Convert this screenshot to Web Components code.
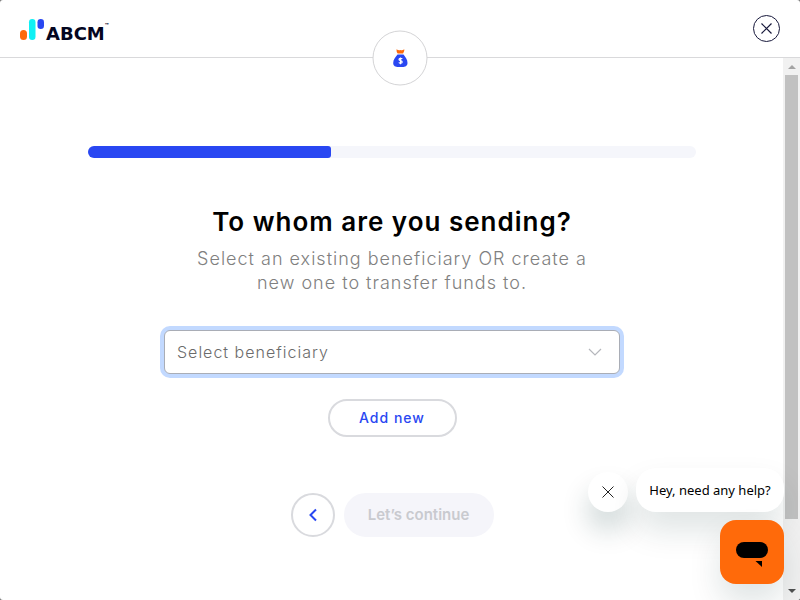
<!DOCTYPE html>
<html lang="en">
<head>
<meta charset="utf-8">
<meta name="viewport" content="width=device-width, initial-scale=1">
<title>Send money</title>
<style>
html,body{height:100%}
body{margin:0;background:#777;font-family:Inter,"Noto Sans",sans-serif;--blue:#2947f2}
</style>
</head>
<body>
<transfer-app></transfer-app>
<script>
const define=(name,html,setup)=>customElements.define(name,class extends HTMLElement{
  connectedCallback(){
    if(this.shadowRoot)return;
    const t=document.createElement('template');
    t.innerHTML=html;
    this.attachShadow({mode:'open'}).append(t.content.cloneNode(true));
    if(setup)setup(this);
  }
});

define('brand-logo',`<style>
:host{display:block}
a{display:flex;align-items:flex-start;color:#04061f;text-decoration:none}
svg{display:block;margin-right:1px}
b{font:bold 18px/20px "DejaVu Sans",sans-serif;margin-top:5px}
sup{font-size:6px;font-weight:800;line-height:8px;margin:3px 0 0}
</style>
<a href="#" aria-label="ABCM home"><svg width="25" height="22" viewBox="0 0 25 22" aria-hidden="true">
<rect x="0" y="11" width="7" height="10" rx="3.5" fill="#ff6a0a"/><rect x="9" y="0" width="6.500" height="21" rx="3.200" fill="#0ff0f4"/><rect x="17.500" y="0" width="6.500" height="10" rx="3.200" fill="#2947f2"/></svg><b>ABCM</b><sup>™</sup></a>`);

define('step-badge',`<style>
:host{box-sizing:border-box;display:grid;place-items:center;width:55px;height:55px;border:1px solid #d4d4d6;border-radius:50%;background:#fff}
</style>
<svg width="16" height="20" viewBox="0 0 16 20" role="img" aria-label="Money bag">
<path d="M4 .8Q6 2.200 8 1.600Q10 2.200 11.800.8Q12.200 3 10.600 5H5.200Q3.800 3.200 4 .8Z" fill="#ff6a0a"/>
<path d="M5 6H11C13 8.500 15 11 15 14.500C15 17.500 12.500 18.500 10 18.500H6C3 18.500.7 17.500.7 14.500C.7 11 3 8.500 5 6Z" fill="#2947f2"/>
<path d="M9.800 10.500C9.200 9.700 6.500 9.600 6.500 11C6.500 12.400 9.700 11.900 9.700 13.500C9.700 15 7 14.900 6.300 14M8 9V15.800" fill="none" stroke="#fff" stroke-width="1.200"/></svg>`);

define('app-header',`<style>
:host{position:relative;box-sizing:border-box;display:flex;align-items:center;justify-content:space-between;min-height:58px;padding:12px 20px;border-bottom:1px solid #d9d9db}
brand-logo{padding-top:5px}
button{display:grid;place-items:center;box-sizing:border-box;width:27px;height:27px;padding:0;border:1px solid #17183b;border-radius:50%;background:#fff;color:#17183b}
step-badge{position:absolute;left:50%;top:100%;transform:translate(-50%,-50%);z-index:2;margin-top:1px}
</style>
<brand-logo></brand-logo><step-badge></step-badge>
<button aria-label="Close"><svg width="13" height="13" viewBox="0 0 13 13" aria-hidden="true"><path d="M1.500 1.500L11.500 11.500M11.500 1.500L1.500 11.500" stroke="currentColor" stroke-width="1.200"/></svg></button>`);

define('step-progress',`<style>
:host{display:block;height:12px;border-radius:6px;background:#f5f6fb;overflow:hidden}
div{height:100%;border-radius:0 3px 3px 0;background:var(--blue)}
</style><div role="progressbar" aria-label="Transfer progress" aria-valuemin="0" aria-valuemax="100"></div>`,h=>{
  const bar=h.shadowRoot.querySelector('div'),v=h.getAttribute('value');
  bar.style.width=v+'%';bar.setAttribute('aria-valuenow',v);
});

define('beneficiary-select',`<style>
:host{display:block;position:relative}
select{appearance:none;display:block;box-sizing:border-box;width:100%;height:44px;padding:0 40px 0 12px;border:1px solid #a9adb6;border-radius:6px;outline:0;background:#fff;box-shadow:0 0 0 4px #c2d9ff;color:#6b6b6b;font:300 16px/24px Inter,sans-serif;letter-spacing:1px}
svg{position:absolute;right:18px;top:18px;pointer-events:none}
</style>
<select aria-label="Beneficiary"><option>Select beneficiary</option></select>
<svg width="14" height="9" viewBox="0 0 14 9" aria-hidden="true"><path d="M1 1L7 7L13 1" fill="none" stroke="#b5b7bc" stroke-width="1.200"/></svg>`);

define('pill-button',`<style>
:host{display:block}
button{box-sizing:border-box;display:grid;place-items:center;width:100%;height:100%;padding:0;border:2px solid #d9dade;border-radius:24px;background:#fff;color:var(--blue);font:500 14px/20px Inter,sans-serif;letter-spacing:1px}
:host([muted]) button{border-color:#f5f5fa;background:#f5f5fa;color:#c9cacf;font-size:15px;font-weight:600;letter-spacing:0}
</style><button><slot></slot></button>`,h=>{
  const b=h.shadowRoot.querySelector('button');
  if(h.hasAttribute('muted'))b.disabled=true;
  if(h.hasAttribute('label'))b.setAttribute('aria-label',h.getAttribute('label'));
});

define('transfer-form',`<style>
:host{display:flex;flex-direction:column;align-items:center;padding:88px 88px 40px}
step-progress{align-self:stretch}
h1{margin:46px 0 0;color:#000;font-size:26px;font-weight:600;line-height:36px;letter-spacing:1px;text-align:center}
p{max-width:420px;margin:7px 0 0;color:#808080;font-size:18px;font-weight:300;line-height:24px;letter-spacing:1px;text-align:center}
beneficiary-select{width:75%;margin-top:35px}
.add{width:129px;height:38px;margin-top:25px}
footer{display:flex;gap:9px;margin-top:56px}
.back{width:44px;height:44px}
.next{width:150px;height:44px}
</style>
<step-progress value="40"></step-progress>
<h1>To whom are you sending?</h1>
<p>Select an existing beneficiary OR create a new one to transfer funds to.</p>
<beneficiary-select></beneficiary-select>
<pill-button class="add">Add new</pill-button>
<footer><pill-button class="back" label="Back"><svg width="10" height="14" viewBox="0 0 10 14" aria-hidden="true"><path d="M8 1.500L2.500 7L8 12.500" fill="none" stroke="#2947f2" stroke-width="2"/></svg></pill-button>
<pill-button class="next" muted>Let’s continue</pill-button></footer>`);

define('scroll-rail',`<style>
:host{display:flex;flex-direction:column;align-items:center;box-sizing:border-box;width:17px;padding:7px 0;margin-left:-1px;background:#f1f1f1}
svg{display:block;flex:none}
div{width:13px;flex:442;margin-top:6px;background:#c1c1c1}
i{flex:70}
</style><svg width="8" height="4" viewBox="0 0 8 4" aria-hidden="true"><path d="M0 4L4 0L8 4Z" fill="#a3a3a3"/></svg><div></div><i></i><svg width="8" height="4" viewBox="0 0 8 4" aria-hidden="true"><path d="M0 0L4 4L8 0Z" fill="#505050"/></svg>`);

define('help-chat',`<style>
:host{display:flex;flex-direction:column;align-items:flex-end;gap:8px}
.row{display:flex;align-items:flex-end;gap:8px}
button{box-sizing:border-box;display:grid;place-items:center;padding:0;border:0;background:#fff;box-shadow:0 18px 32px rgba(0,50,50,.13)}
.close{width:40px;height:40px;border-radius:50%;box-shadow:0 18px 28px rgba(0,50,50,.2)}
.message{min-width:148px;height:44px;padding:0 12px;border-radius:20px;color:#000;font:400 13px/20px "Noto Sans",sans-serif;white-space:nowrap}
.open{width:64px;height:64px;border-radius:16px;background:#ff6a0a}
</style>
<div class="row"><button class="close" aria-label="Dismiss message"><svg width="12" height="12" viewBox="0 0 12 12" aria-hidden="true"><path d="M.5.5L11.500 11.500M11.500.5L.5 11.500" stroke="#222" stroke-width="1"/></svg></button><button class="message">Hey, need any help?</button></div>
<button class="open" aria-label="Open chat"><svg width="32" height="32" viewBox="0 0 32 32" aria-hidden="true"><rect y="6" width="32" height="16" rx="8"/><path d="M19.500 25H26V31Z"/></svg></button>`);

define('transfer-app',`<style>
:host{position:relative;display:flex;flex-direction:column;min-height:100vh;background:#fff;border-radius:3px;overflow:hidden}
main{flex:1;display:flex}
transfer-form{flex:1}
help-chat{position:absolute;right:16px;bottom:16px}
</style><app-header></app-header><main><transfer-form></transfer-form><scroll-rail></scroll-rail></main><help-chat></help-chat>`);
</script>
</body>
</html>
